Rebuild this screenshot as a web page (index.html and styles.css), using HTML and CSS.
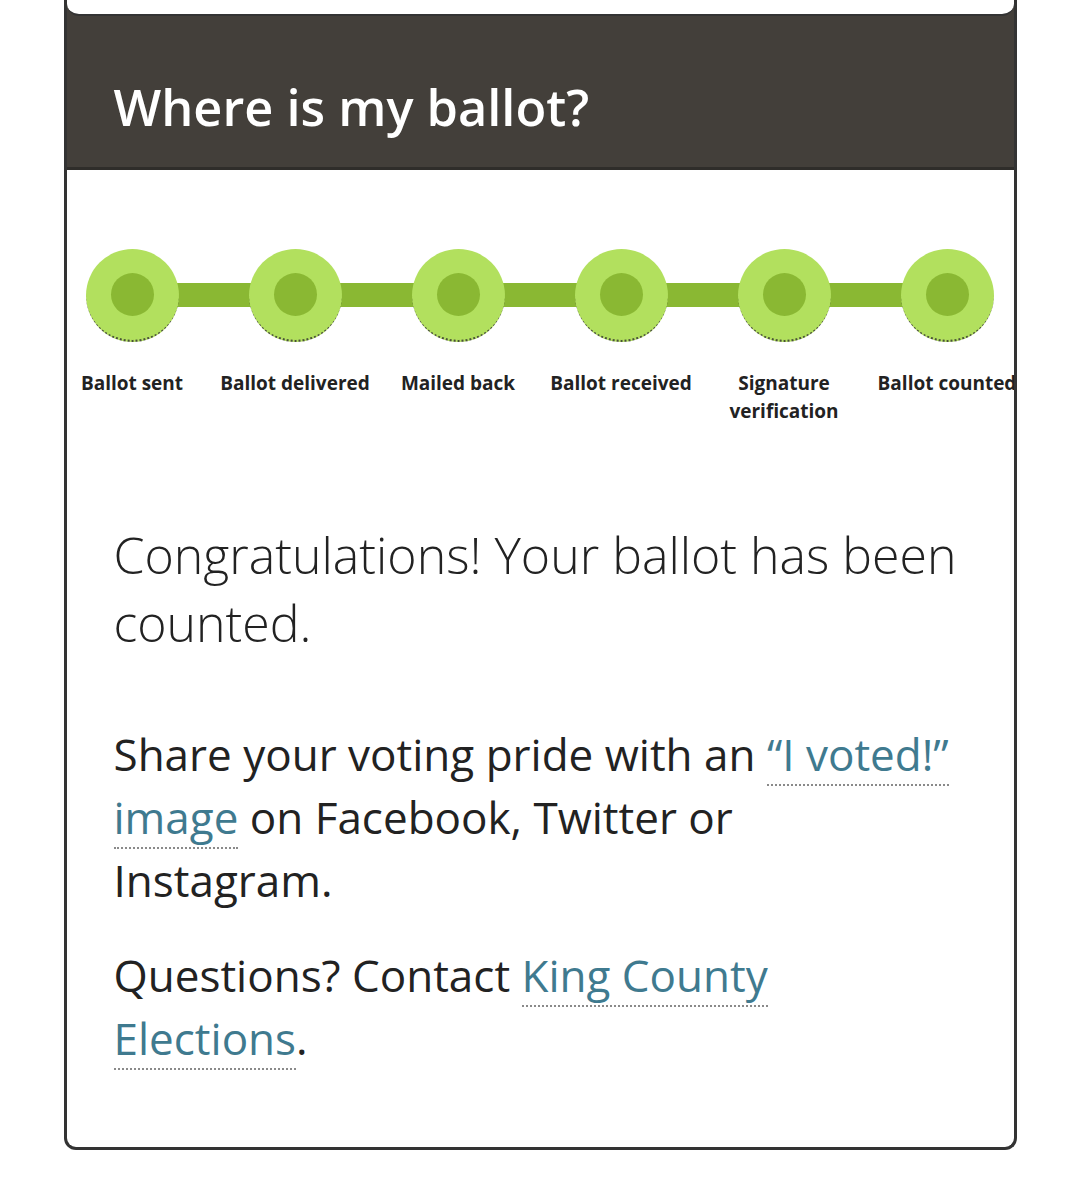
FILE: index.html
```html
<!DOCTYPE html>
<html lang="en">
<head>
<meta charset="utf-8">
<title>Where is my ballot?</title>
<link rel="stylesheet" href="styles.css">
</head>
<body>
<div class="card">
  <header class="hd">
    <div class="stub"></div>
    <h1 class="title">Where is my ballot?</h1>
  </header>
  <ol class="steps">
    <li class="step"><span class="dot"><span class="core"></span></span><span class="label">Ballot sent</span></li>
    <li class="step"><span class="dot"><span class="core"></span></span><span class="label">Ballot delivered</span></li>
    <li class="step"><span class="dot"><span class="core"></span></span><span class="label">Mailed back</span></li>
    <li class="step"><span class="dot"><span class="core"></span></span><span class="label">Ballot received</span></li>
    <li class="step"><span class="dot"><span class="core"></span></span><span class="label">Signature verification</span></li>
    <li class="step"><span class="dot"><span class="core"></span></span><span class="label">Ballot counted</span></li>
  </ol>
  <div class="body">
    <p class="lead">Congratulations! Your ballot has been counted.</p>
    <p class="txt share">Share your voting pride with an <a href="#" class="lnk">“I voted!” image</a> on Facebook, Twitter or Instagram.</p>
    <p class="txt">Questions? Contact <a href="#" class="lnk">King County Elections</a>.</p>
  </div>
</div>
</body>
</html>
```
FILE: styles.css
```css
html, body {
  margin: 0;
  padding: 0;
  background: #fff;
}
body {
  font-family: "Open Sans", "Noto Sans", sans-serif;
  color: #222;
}
.card {
  width: 953px;
  box-sizing: border-box;
  margin: 0 auto;
  border: 3px solid #333;
  border-top: none;
  border-radius: 0 0 12px 12px;
  overflow: hidden;
  background: #fff;
}
.hd {
  background: #433f3a;
  border-bottom: 3px solid #2f2d2a;
}
.stub {
  height: 14px;
  background: #fff;
  border-bottom: 2px solid #333;
  border-radius: 0 0 12px 12px;
}
.title {
  margin: 0;
  padding: 56px 47px 25px;
  font-size: 50.5px;
  line-height: 70px;
  font-weight: 600;
  color: #fff;
}
.steps {
  list-style: none;
  margin: 0 0 0 -16px;
  padding: 79px 0 0;
  display: flex;
}
.step {
  flex: none;
  width: 163px;
  position: relative;
  display: flex;
  flex-direction: column;
  align-items: center;
}
.step + .step::before {
  content: "";
  position: absolute;
  top: 34px;
  left: -50%;
  width: 100%;
  height: 24px;
  background: #8ab833;
}
.dot {
  position: relative;
  z-index: 1;
  width: 93px;
  height: 93px;
  box-sizing: border-box;
  border-radius: 50%;
  background: #b2e05e;
  border-bottom: 2px dotted #4a5238;
  display: flex;
  align-items: center;
  justify-content: center;
}
.core {
  width: 43px;
  height: 43px;
  border-radius: 50%;
  background: #8ab833;
}
.label {
  margin-top: 27px;
  font-size: 19px;
  line-height: 28px;
  font-weight: 700;
  color: #222;
  text-align: center;
  max-width: 120px;
}
.step:nth-child(2) .label,
.step:nth-child(4) .label,
.step:nth-child(6) .label {
  max-width: none;
  white-space: nowrap;
}
.body {
  padding: 96px 55px 77px 47px;
}
.lead {
  margin: 0 0 66px;
  font-size: 50px;
  line-height: 68px;
  font-weight: 300;
  color: #222;
}
.txt {
  margin: 0;
  font-size: 44px;
  line-height: 63px;
  font-weight: 400;
  color: #222;
}
.share {
  margin-bottom: 32px;
}
.lnk {
  color: #3f7a8f;
  text-decoration: none;
  border-bottom: 2px dotted #8a8a8a;
}
```
